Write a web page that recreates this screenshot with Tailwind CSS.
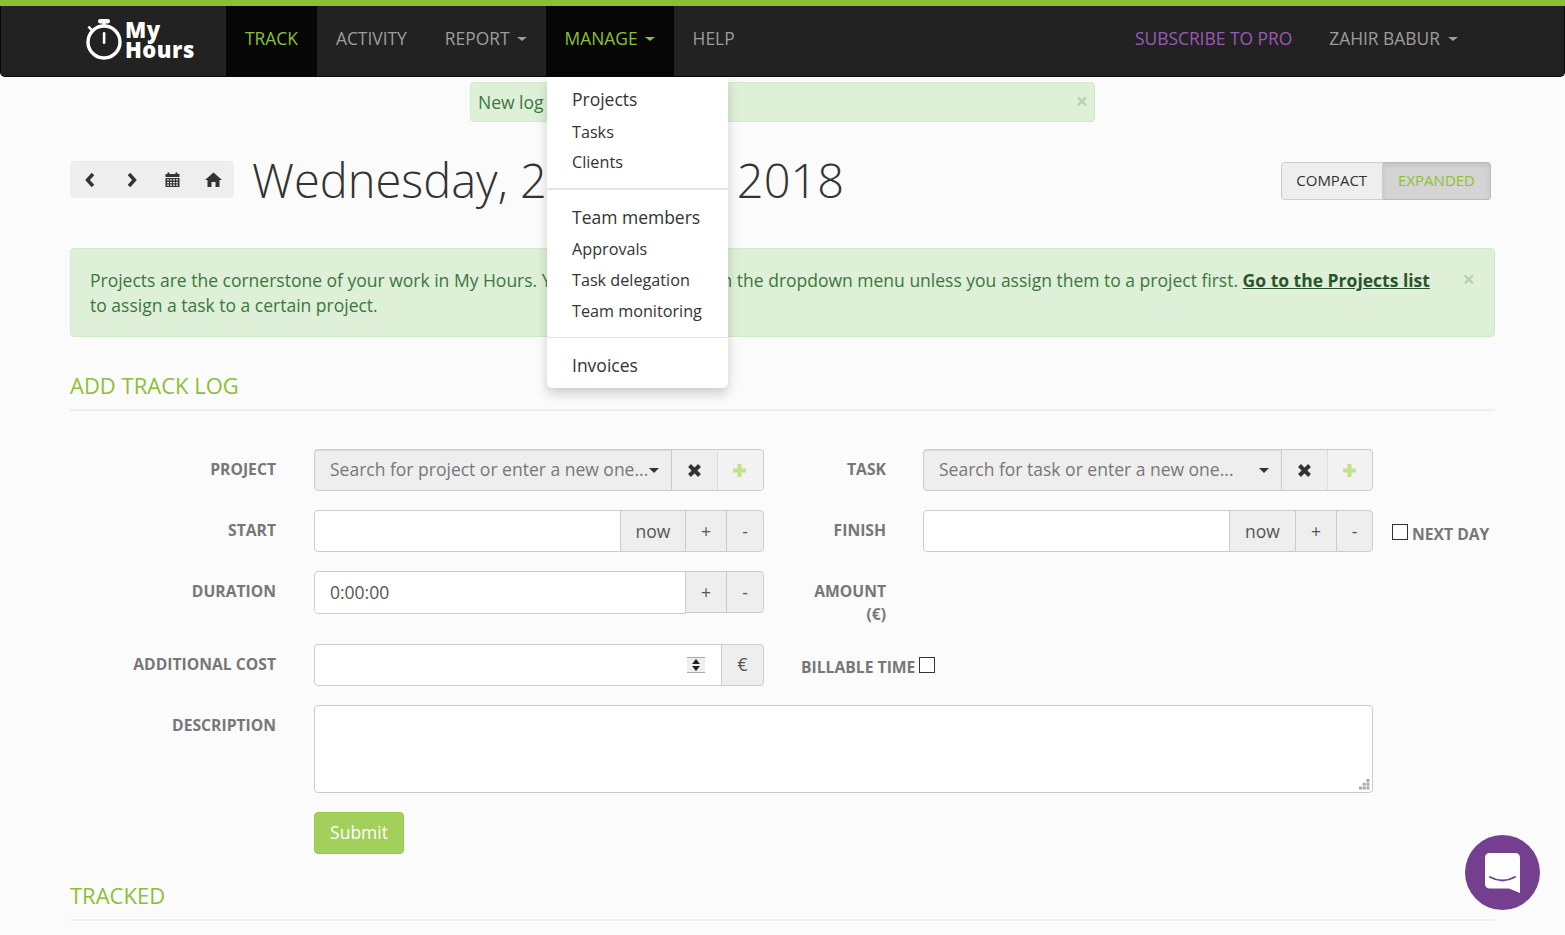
<!DOCTYPE html>
<html lang="en">
<head>
    <meta charset="UTF-8">
    <title>My Hours - Track</title>
    <script src="https://cdn.jsdelivr.net/npm/@tailwindcss/browser@4"></script>
</head>
<body class="bg-[#fbfbfb] font-['Open_Sans',sans-serif] text-[17.5px] text-[#333] overflow-hidden h-[935px]">
<!-- top bar -->
<div class="relative h-[6px] bg-[#8cc034]">
    <div class="absolute right-0 top-[2px] w-[85px] h-[6px] rounded-l-full bg-[#8cc034]/60 blur-[2px]"></div>
</div>

<!-- navbar -->
<nav class="relative z-10 h-[71px] bg-[#222] border border-t-0 border-[#080808] rounded-b-[5px] flex items-stretch pb-[5px] text-[17.4px] text-[#9d9d9d]">
    <a class="w-[225px] shrink-0 flex items-center pl-[84px] gap-[2px] text-white">
        <svg width="38" height="44" viewBox="0 0 38 44" fill="none">
            <circle cx="19" cy="25" r="16" stroke="white" stroke-width="3.4"/>
            <rect x="13" y="2" width="12" height="4.5" rx="2.2" fill="white"/>
            <rect x="17.5" y="5" width="3" height="5" fill="white"/>
            <rect x="17.8" y="15" width="2.6" height="12" rx="1.3" fill="white"/>
            <path d="M3.5 9.5 L6.5 13" stroke="white" stroke-width="2.6"/>
        </svg>
        <span class="font-extrabold text-[22px] leading-[20px] tracking-[0.5px]">My<br>Hours</span>
    </a>
    <a class="-mb-[5px] pb-[5px] flex items-center px-[19px] bg-[#060606] text-[#8cc034]">TRACK</a>
    <a class="flex items-center px-[19px]">ACTIVITY</a>
    <a class="flex items-center px-[19px] gap-[7px]">REPORT <span class="border-t-[4px] border-x-[5px] border-x-transparent border-t-[#9d9d9d]"></span></a>
    <a class="-mb-[5px] pb-[5px] flex items-center px-[19px] gap-[7px] bg-[#060606] text-[#8cc034]">MANAGE <span class="border-t-[4px] border-x-[5px] border-x-transparent border-t-[#8cc034]"></span></a>
    <a class="flex items-center px-[19px]">HELP</a>
    <div class="ml-auto flex items-stretch mr-[87px]">
        <a class="flex items-center px-[19px] text-[#9b59b6] -mr-[1px]">SUBSCRIBE TO PRO</a>
        <a class="flex items-center pl-[19px] pr-[19px] gap-[8px]">ZAHIR BABUR <span class="border-t-[4px] border-x-[5px] border-x-transparent border-t-[#9d9d9d]"></span></a>
    </div>
</nav>

<!-- manage dropdown -->
<div class="absolute z-20 left-[547px] top-[77px] w-[181px] h-[311px] bg-white rounded-b-[5px] shadow-[0_6px_12px_rgba(0,0,0,0.18)] text-[#333]">
    <div class="pl-[25px] pt-[9px]">
        <div class="h-[27px] leading-[27px]">Projects</div>
        <div class="mt-[4px] h-[30px] leading-[30px] text-[16.2px]">Tasks</div>
        <div class="h-[30px] leading-[30px] text-[16.2px]">Clients</div>
    </div>
    <div class="mt-[11px] h-[2px] bg-[#e5e5e5]"></div>
    <div class="pl-[25px] pt-[14px]">
        <div class="h-[27px] leading-[27px]">Team members</div>
        <div class="mt-[3px] h-[31px] leading-[31px] text-[16.2px]">Approvals</div>
        <div class="h-[31px] leading-[31px] text-[16.2px]">Task delegation</div>
        <div class="h-[31px] leading-[31px] text-[16.2px]">Team monitoring</div>
    </div>
    <div class="mt-[10px] h-px bg-[#e5e5e5]"></div>
    <div class="pl-[25px] pt-[14px] leading-[27px]">Invoices</div>
</div>

<!-- small alert -->
<div class="relative mx-auto mt-[5px] w-[625px] h-[40px] bg-[#dff0d8] border border-[#d6e9c6] rounded-[4px] text-[#3c763d] pl-[7px] leading-[39px]">
    New log added
    <span class="absolute right-[6px] -top-[2px] font-bold text-[22px] text-[#3c763d]/25">×</span>
</div>

<main class="px-[70px]">
    <!-- date header -->
    <div class="mt-[39px] h-[39px] flex items-start">
        <div class="w-[164px] h-[37px] bg-[#eee] rounded-[4px] flex items-center text-[#333]">
            <div class="w-[41px] flex justify-center">
                <svg class="-ml-[2px]" width="14" height="16" viewBox="0 0 14 16"><path d="M10 2 L4.5 8 L10 14" fill="none" stroke="#333" stroke-width="3.4"/></svg>
            </div>
            <div class="w-[41px] flex justify-center">
                <svg width="14" height="16" viewBox="0 0 14 16"><path d="M4 2 L9.5 8 L4 14" fill="none" stroke="#333" stroke-width="3.4"/></svg>
            </div>
            <div class="w-[41px] flex justify-center">
                <svg width="15" height="15" viewBox="0 0 15 15">
                    <path d="M0.5 2 H2.5 V0.5 H4.5 V2 H10.5 V0.5 H12.5 V2 H14.5 V5 H0.5 Z" fill="#333"/>
                    <path d="M0.5 6 H14.5 V15 H0.5 Z M2 7.2 V8.6 H4 V7.2 Z M5 7.2 V8.6 H7 V7.2 Z M8 7.2 V8.6 H10 V7.2 Z M11 7.2 V8.6 H13 V7.2 Z M2 9.9 V11.3 H4 V9.9 Z M5 9.9 V11.3 H7 V9.9 Z M8 9.9 V11.3 H10 V9.9 Z M11 9.9 V11.3 H13 V9.9 Z M2 12.4 V13.8 H4 V12.4 Z M5 12.4 V13.8 H7 V12.4 Z M8 12.4 V13.8 H10 V12.4 Z M11 12.4 V13.8 H13 V12.4 Z" fill="#333" fill-rule="evenodd"/>
                </svg>
            </div>
            <div class="w-[41px] flex justify-center">
                <svg width="17" height="15" viewBox="0 0 17 15"><path d="M8.5 0.5 L17 8 H14.5 V15 H10.5 V10 H6.5 V15 H2.5 V8 H0 Z" fill="#333"/></svg>
            </div>
        </div>
        <h1 class="ml-[18px] font-light text-[47px] leading-[38px] text-[#333] whitespace-nowrap">Wednesday, 21 March <span class="ml-[5px]">2018</span></h1>
        <div class="ml-auto mr-[4px] mt-px flex h-[38px] text-[15px] leading-[35px]">
            <span class="pl-[14px] pr-[15px] bg-[#eee] border border-[#ccc] rounded-l-[4px]">COMPACT</span>
            <span class="px-[15px] bg-[#d4d4d4] border border-l-0 border-[#bbb] rounded-r-[4px] text-[#8cc034] shadow-[inset_0_3px_5px_rgba(0,0,0,0.08)]">EXPANDED</span>
        </div>
    </div>

    <!-- info alert -->
    <div class="relative mt-[48px] h-[89px] bg-[#dff0d8] border border-[#d6e9c6] rounded-[4px] pl-[19px] pr-[50px] pt-[19px] text-[#3c763d] leading-[25px]">
        Projects are the cornerstone of your work in My Hours. You cannot see tasks in the dropdown menu unless you assign them to a project first. <a class="font-bold underline text-[#2b542c]">Go to the Projects list</a> to assign a task to a certain project.
        <span class="absolute right-[19px] top-[17px] font-bold text-[22px] text-[#3c763d]/25">×</span>
    </div>

    <h2 class="mt-[34px] h-[40px] border-b-2 border-[#eee] text-[22px] leading-[28px] text-[#8cc034]">ADD TRACK LOG</h2>

    <!-- track form -->
    <form class="mt-[38px] text-[#555]">
        <div class="flex h-[42px]">
            <label class="w-[206px] text-right font-bold text-[15.7px] text-[#777] leading-[40px]">PROJECT</label>
            <div class="ml-[38px] w-[450px] flex border border-[#ccc] rounded-[4px] bg-[#eee]">
                <div class="w-[356px] flex items-center pl-[15px] pr-[12px] text-[#777] shadow-[inset_0_1px_1px_rgba(0,0,0,0.08)]">
                    <span class="whitespace-nowrap pb-[2px]">Search for project or enter a new one...</span>
                    <span class="ml-auto border-t-[5px] border-x-[5px] border-x-transparent border-t-[#333]"></span>
                </div>
                <div class="w-[46px] border-l border-[#ccc] flex items-center justify-center">
                    <svg width="15" height="15" viewBox="0 0 15 15"><path d="M2.5 2.5 L12.5 12.5 M12.5 2.5 L2.5 12.5" stroke="#333" stroke-width="4"/></svg>
                </div>
                <div class="flex-1 border-l border-[#ddd] bg-[#f2f2f2] rounded-r-[4px] flex items-center justify-center">
                    <svg class="-ml-[2px]" width="15" height="15" viewBox="0 0 15 15"><path d="M7.5 1 V14 M1 7.5 H14" stroke="#c5e18f" stroke-width="4.2"/></svg>
                </div>
            </div>
            <label class="w-[122px] text-right font-bold text-[15.7px] text-[#777] leading-[40px]">TASK</label>
            <div class="ml-[37px] w-[450px] flex border border-[#ccc] rounded-[4px] bg-[#eee]">
                <div class="w-[357px] flex items-center pl-[15px] pr-[12px] text-[#777] shadow-[inset_0_1px_1px_rgba(0,0,0,0.08)]">
                    <span class="whitespace-nowrap pb-[2px]">Search for task or enter a new one...</span>
                    <span class="ml-auto border-t-[5px] border-x-[5px] border-x-transparent border-t-[#333]"></span>
                </div>
                <div class="w-[46px] border-l border-[#ccc] flex items-center justify-center">
                    <svg width="15" height="15" viewBox="0 0 15 15"><path d="M2.5 2.5 L12.5 12.5 M12.5 2.5 L2.5 12.5" stroke="#333" stroke-width="4"/></svg>
                </div>
                <div class="flex-1 border-l border-[#ddd] bg-[#f2f2f2] rounded-r-[4px] flex items-center justify-center">
                    <svg class="-ml-[2px]" width="15" height="15" viewBox="0 0 15 15"><path d="M7.5 1 V14 M1 7.5 H14" stroke="#c5e18f" stroke-width="4.2"/></svg>
                </div>
            </div>
        </div>

        <div class="flex h-[42px] mt-[19px]">
            <label class="w-[206px] text-right font-bold text-[15.7px] text-[#777] leading-[40px]">START</label>
            <div class="ml-[38px] w-[450px] flex border border-[#ccc] rounded-[4px] bg-[#eee]">
                <input type="text" class="w-[305px] bg-white rounded-l-[4px]">
                <span class="w-[65px] border-l border-[#ccc] text-center leading-[40px]">now</span>
                <span class="w-[41px] border-l border-[#ccc] text-center leading-[40px]">+</span>
                <span class="flex-1 border-l border-[#ccc] text-center leading-[40px]">-</span>
            </div>
            <label class="w-[122px] text-right font-bold text-[15.7px] text-[#777] leading-[40px]">FINISH</label>
            <div class="ml-[37px] w-[450px] flex border border-[#ccc] rounded-[4px] bg-[#eee]">
                <input type="text" class="w-[305px] bg-white rounded-l-[4px]">
                <span class="w-[66px] border-l border-[#ccc] text-center leading-[40px]">now</span>
                <span class="w-[41px] border-l border-[#ccc] text-center leading-[40px]">+</span>
                <span class="flex-1 border-l border-[#ccc] text-center leading-[40px]">-</span>
            </div>
            <label class="ml-[19px] flex items-start pt-[14px] font-bold text-[15.7px] text-[#777] leading-[20px] whitespace-nowrap">
                <span class="w-[16px] h-[16px] border border-[#333] bg-white mr-[4px]"></span>
                <span>NEXT DAY</span>
            </label>
        </div>

        <div class="flex h-[43px] mt-[19px]">
            <label class="w-[206px] text-right font-bold text-[15.7px] text-[#777] leading-[40px]">DURATION</label>
            <div class="ml-[38px] w-[450px] h-[42px] flex border border-[#ccc] rounded-[4px] bg-[#eee]">
                <div class="w-[371px] h-[42px] -mb-px bg-white border-r border-b border-[#ccc] rounded-l-[4px] pl-[15px] leading-[41px] text-[#555]">0:00:00</div>
                <span class="w-[40px] text-center leading-[40px]">+</span>
                <span class="flex-1 border-l border-[#ccc] text-center leading-[40px]">-</span>
            </div>
            <label class="w-[122px] text-right font-bold text-[15.7px] text-[#777] leading-[23px] pt-[9px]">AMOUNT<br>(€)</label>
        </div>

        <div class="flex h-[42px] mt-[30px]">
            <label class="w-[206px] text-right font-bold text-[15.7px] text-[#777] leading-[40px]">ADDITIONAL COST</label>
            <div class="ml-[38px] w-[450px] flex border border-[#ccc] rounded-[4px] bg-[#eee]">
                <div class="relative w-[406px] bg-white rounded-l-[4px]">
                    <span class="absolute left-[372px] top-[12px] w-[18px] h-[16px] bg-[#efefef] border-y border-[#aaa] flex flex-col items-center justify-center gap-[2px]">
                        <span class="border-b-[5px] border-x-[4px] border-x-transparent border-b-[#222]"></span>
                        <span class="border-t-[5px] border-x-[4px] border-x-transparent border-t-[#222]"></span>
                    </span>
                </div>
                <span class="flex-1 border-l border-[#ccc] text-center leading-[38px]">€</span>
            </div>
            <label class="ml-[37px] font-bold text-[15.7px] text-[#777] leading-[46px] whitespace-nowrap">BILLABLE TIME</label>
            <span class="ml-[4px] mt-[13px] w-[16px] h-[16px] border border-[#333] bg-white"></span>
        </div>

        <div class="flex h-[88px] mt-[19px]">
            <label class="w-[206px] text-right font-bold text-[15.7px] text-[#777] leading-[40px]">DESCRIPTION</label>
            <div class="relative ml-[38px] w-[1059px]">
                <textarea class="block w-full h-[88px] bg-white border border-[#ccc] rounded-[4px] resize-none"></textarea>
                <svg class="absolute right-[3px] bottom-[3px]" width="11" height="11" viewBox="0 0 11 11" fill="#aaa">
                    <rect x="7.5" y="0" width="3" height="3"/><rect x="3.7" y="3.7" width="3" height="3"/><rect x="7.5" y="3.7" width="3" height="3"/>
                    <rect x="0" y="7.5" width="3" height="3"/><rect x="3.7" y="7.5" width="3" height="3"/><rect x="7.5" y="7.5" width="3" height="3"/>
                </svg>
            </div>
        </div>

        <div class="mt-[19px] ml-[244px]">
            <button type="button" class="w-[90px] h-[42px] pb-[2px] bg-[#a2d05a] border border-[#98c74f] rounded-[4px] text-white">Submit</button>
        </div>
    </form>

    <h2 class="mt-[27px] h-[40px] border-b-2 border-[#eee] text-[22px] leading-[28px] text-[#8cc034]">TRACKED</h2>
</main>

<!-- chat launcher -->
<div class="fixed left-[1465px] top-[835px] w-[75px] h-[75px] rounded-full bg-[#753f90] flex items-center justify-center">
    <svg width="35" height="40" viewBox="0 0 35 40">
        <path d="M5 0 H30 Q35 0 35 5 V40 L24 35.5 H5 Q0 35.5 0 30.5 V5 Q0 0 5 0 Z" fill="white"/>
        <path d="M5 24 Q17.5 31 30 24" fill="none" stroke="#753f90" stroke-width="2" stroke-linecap="round"/>
    </svg>
</div>
</body>
</html>
